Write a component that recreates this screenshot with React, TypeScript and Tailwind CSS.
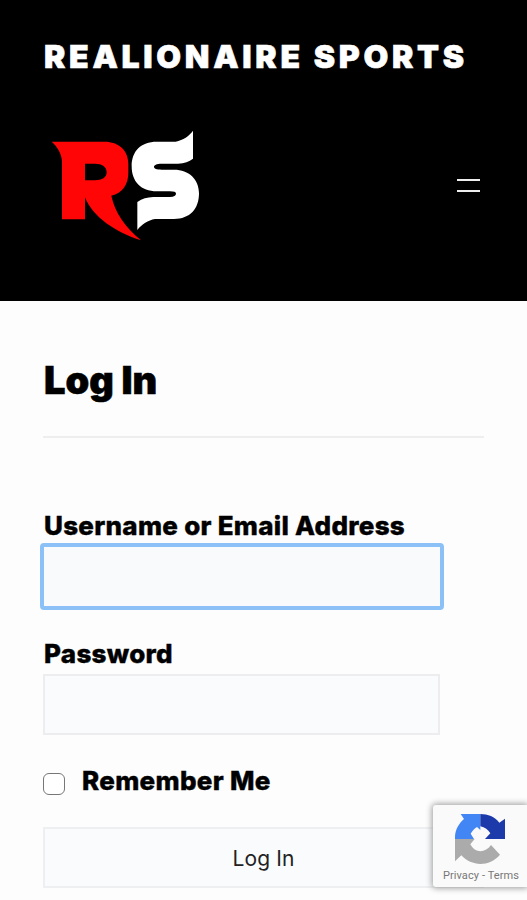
function Logo() {
  return (
    <svg viewBox="0 0 510 390" className="block h-[130px] w-[170px]" role="img" aria-label="Realionaire Sports">
      <path
        fill="#ff0505"
        fillRule="evenodd"
        d="M35 65H194C236 65 265 91 265 132V158C265 194 247 219 214 227C225 278 254 320 303 361C227 337 158 291 135 232V298H66V124C65 101 52 80 35 65ZM135 131V181H164C187 181 200 173 200 157C200 140 187 131 164 131Z"
      />
      <path
        fill="#fff"
        d="M459 32V116C447 125 434 130 414 131H365C349 131 342 135 342 141C342 146 349 149 365 149H402C447 149 477 178 477 220C477 267 450 297 402 297H345C324 301 306 312 292 330V246C307 236 321 232 340 231H390C402 230 408 227 408 221C408 216 402 214 390 214H350C303 214 275 185 275 139C275 93 303 65 350 65H407C430 60 447 48 459 32Z"
      />
    </svg>
  );
}

function RecaptchaMark() {
  return (
    <svg viewBox="0 0 150 150" className="block h-[50px] w-[50px]" aria-hidden="true">
      <path fill="#4285f4" d="M17 0H76V48L66 39C58 44 53 50 47 59L57 75H0C-1 51 9 31 27 15Z" />
      <path fill="#1c3aa9" d="M76 0C99 0 119 8 133 26L150 14V75H90L106 58C99 47 90 40 76 37Z" />
      <path fill="#ababab" d="M0 75H59L46 91C60 118 91 118 108 93L135 122C103 159 50 158 19 124L0 142Z" />
    </svg>
  );
}

export default function App() {
  return (
    <div className="relative h-[900px] w-full overflow-hidden bg-[#fdfdfd] font-['Inter','Liberation_Sans',sans-serif] text-black">
      <header className="flex h-[301px] flex-col bg-black pt-[35px] text-white">
        <div className="ml-[44px] h-[44px] whitespace-nowrap text-[32px] leading-[44px] font-black tracking-[3.7px] [-webkit-text-stroke:0.6px_white]">
          REALIONAIRE SPORTS
        </div>
        <div className="mt-[41px] flex items-start justify-between pr-[47px] pl-[40px]">
          <Logo />
          <button aria-label="Menu" className="mt-[59px] flex w-[23px] flex-col gap-[9px]">
            <span className="h-[2px] w-full bg-[#eee]" />
            <span className="h-[2px] w-full bg-[#eee]" />
          </button>
        </div>
      </header>
      <main className="px-[43px]">
        <h1 className="flex h-[137px] items-center border-b-2 border-[#eeeeee] pt-[22px] pl-px text-[38px] leading-[44px] font-black tracking-[0px] [-webkit-text-stroke:0.6px_black]">
          Log In
        </h1>
        <form className="pt-[71px]" onSubmit={(e) => e.preventDefault()}>
          <label htmlFor="user" className="block h-[34px] pl-px whitespace-nowrap text-[26px] leading-[34px] font-extrabold tracking-[0.28px] [-webkit-text-stroke:0.4px_black]">
            Username or Email Address
          </label>
          <input
            id="user"
            className="-ml-[3px] block h-[67px] w-[404px] rounded-[4px] border-4 border-[#8bc1f7] bg-[#f8fafc] outline-none"
          />
          <label htmlFor="pass" className="mt-[27px] block h-[37px] pl-px text-[26px] leading-[34px] font-extrabold tracking-[0.3px] [-webkit-text-stroke:0.4px_black]">
            Password
          </label>
          <input
            id="pass"
            type="password"
            className="block h-[61px] w-[397px] border-2 border-[#ededef] bg-[#f9fbfd] outline-none"
          />
          <label className="mt-[29px] flex h-[34px] items-center text-[26px] leading-[34px] font-extrabold tracking-[0.3px] [-webkit-text-stroke:0.4px_black]">
            <input
              type="checkbox"
              className="mt-[5px] h-[22px] w-[22px] appearance-none rounded-[6px] border-[1.5px] border-[#777] bg-white"
            />
            <span className="ml-[17px]">Remember Me</span>
          </label>
          <button className="mt-[29px] block h-[61px] w-full border-2 border-[#eeeff0] bg-[#f9fbfd] pt-[3px] text-[21px] tracking-[0.1px] text-[#222]">
            Log In
          </button>
        </form>
      </main>
      <aside className="absolute top-[805px] right-0 flex h-[82px] w-[94px] flex-col items-center rounded-l-[3px] bg-[#fafafa] pt-[9px] shadow-[0_0_6px_1px_#999]">
        <RecaptchaMark />
        <div className="mt-[4px] whitespace-nowrap pl-[2px] font-['Roboto',sans-serif] text-[11px] leading-[16px] tracking-[0.1px] text-[#777]">
          Privacy - Terms
        </div>
      </aside>
    </div>
  );
}
